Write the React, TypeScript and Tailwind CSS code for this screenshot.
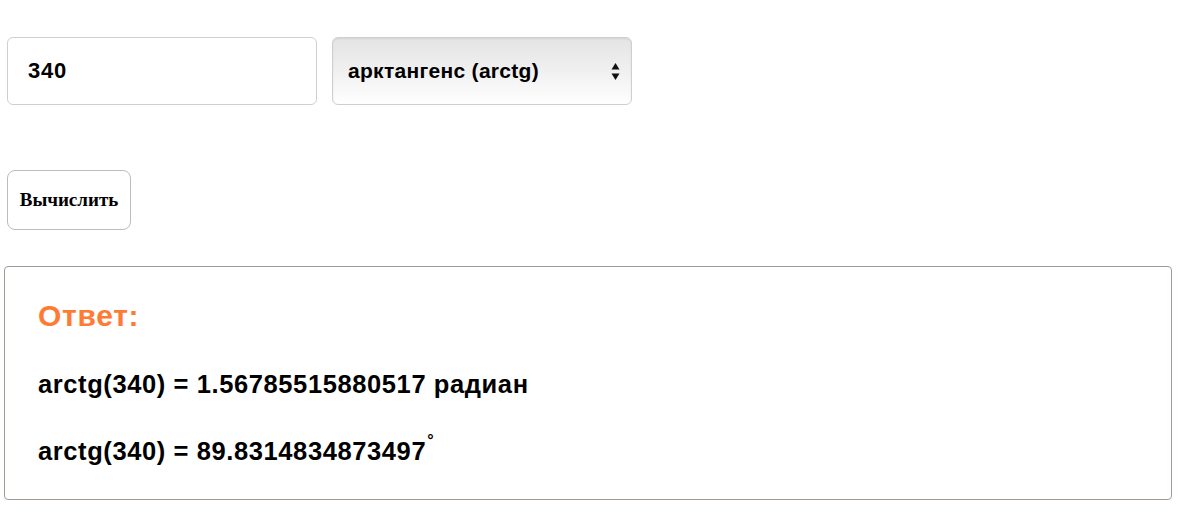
export default function App() {
  return (
    <div className="min-h-[525px] bg-white pt-[37px] font-['Liberation_Sans',Arial,sans-serif] text-black">
      {/* Form row */}
      <div className="ml-[7px] flex gap-[15px]">
        <input
          type="text"
          defaultValue="340"
          className="h-[68px] w-[310px] rounded-[6px] border border-[#cfcfcf] bg-white pl-[20px] text-[22px] font-bold tracking-[0.8px] text-black outline-none"
        />
        <div className="relative flex h-[68px] w-[300px] items-center rounded-[6px] border border-[#cfcfcf] bg-gradient-to-b from-[#e4e4e4] via-[#f0f0f0] to-white pl-[15px] shadow-[inset_0_1px_2px_rgba(0,0,0,0.08)]">
          <span className="text-[21px] font-bold tracking-[0.3px]">арктангенс (arctg)</span>
          <svg
            className="absolute right-[11px] top-[24px]"
            width="9"
            height="19"
            viewBox="0 0 9 19"
          >
            <path d="M4.5 1 L8.5 7.5 L0.5 7.5 Z" fill="#111" />
            <path d="M0.5 11.5 L8.5 11.5 L4.5 18 Z" fill="#111" />
          </svg>
        </div>
      </div>

      {/* Submit */}
      <button className="ml-[7px] mt-[65px] h-[60px] w-[124px] rounded-[8px] border border-[#bcbcbc] bg-white font-['Liberation_Serif','Times_New_Roman',serif] text-[19px] font-bold">
        Вычислить
      </button>

      {/* Result */}
      <div className="ml-[4px] mt-[36px] w-[1168px] rounded-[4px] border border-[#a39b93] pb-[30px] pl-[33px] pt-[34px]">
        <div className="text-[30px] font-bold leading-[30px] tracking-[0.7px] text-[#ff7a32]">Ответ:</div>
        <p className="mt-[39px] text-[25.5px] font-bold leading-[28px] tracking-[0.6px]">
          arctg(340) = 1.56785515880517 радиан
        </p>
        <p className="mt-[39px] text-[25.5px] font-bold leading-[28px] tracking-[0.6px]">
          arctg(340) = 89.8314834873497
          <span className="relative top-[-14px] ml-[1px] text-[16px]">°</span>
        </p>
      </div>
    </div>
  );
}
